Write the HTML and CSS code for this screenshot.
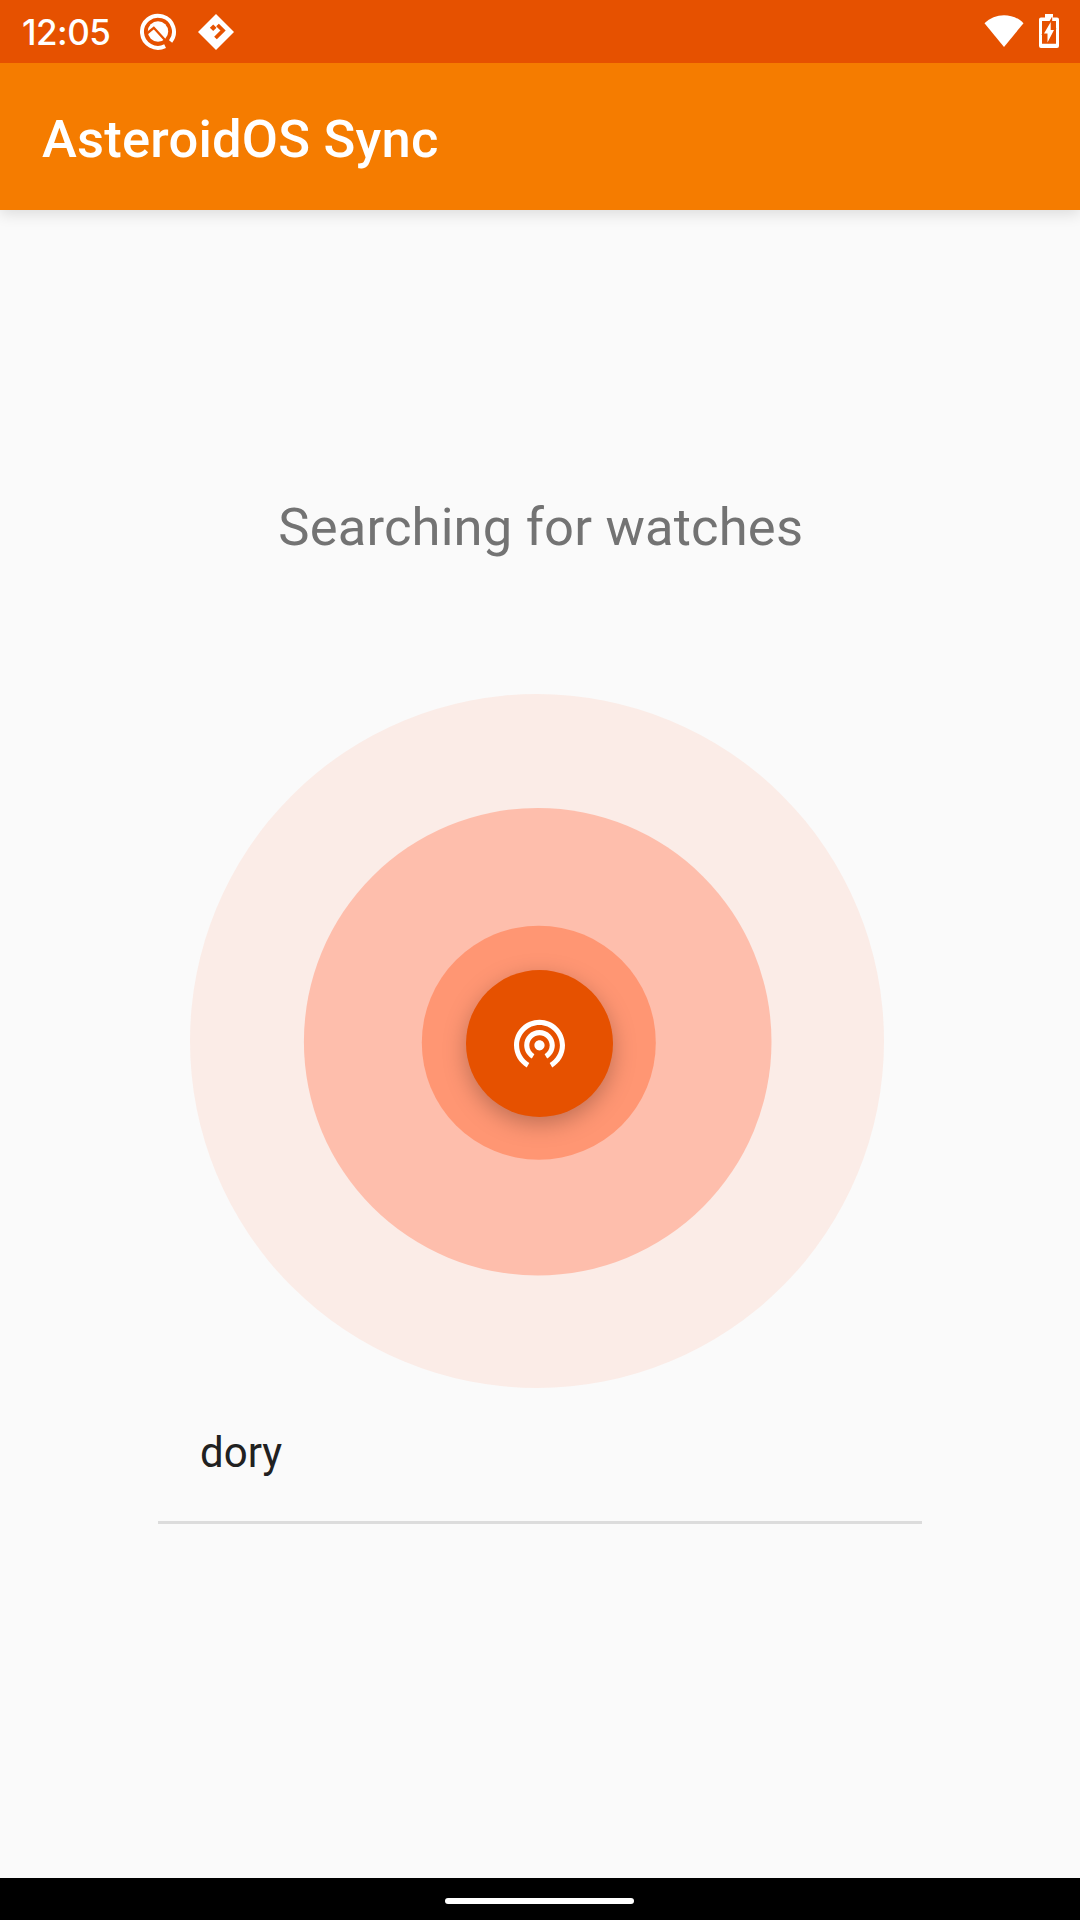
FILE: index.html
```html
<!DOCTYPE html>
<html lang="en">
<head>
<meta charset="utf-8">
<title>AsteroidOS Sync</title>
<link rel="stylesheet" href="styles.css">
</head>
<body>
<div class="screen">
  <div class="status-bar">
    <span class="clock">12:05</span>
    <svg class="icon-q" viewBox="0 0 38 38" width="38" height="38">
      <path d="M26.100 34.100A16 16 0 1 1 31.600 29.600" fill="none" stroke="#fff" stroke-width="4"/>
      <circle cx="19" cy="19.500" r="10.200" fill="#fff"/>
      <path d="M8.500 21L14.800 15.800 31.500 34" fill="none" stroke="#e65100" stroke-width="2.400"/>
    </svg>
    <svg class="icon-diamond" viewBox="0 0 36 36" width="36" height="36">
      <path d="M18 0L36 18 18 36 0 18z" fill="#fff"/>
      <path d="M15.200 10.500l3.300 3.300-3.300 3.300-3.300-3.300z" fill="#e65100"/>
      <path d="M19.500 11L25 16.500 17.500 24" fill="none" stroke="#e65100" stroke-width="3.800"/>
    </svg>
    <svg class="icon-wifi" viewBox="0 0 40 34" width="40" height="34">
      <path d="M0.500 9.200C11 -1.500 29 -1.500 39.500 9.200L20 33z" fill="#fff"/>
    </svg>
    <svg class="icon-battery" viewBox="0 0 20 34" width="20" height="34">
      <path fill="#fff" fill-rule="evenodd" d="M6 0h8v3.500h4a2 2 0 0 1 2 2V32a2 2 0 0 1-2 2H2a2 2 0 0 1-2-2V5.500a2 2 0 0 1 2-2h4zM3 7v22.700h14V7z"/>
      <path class="bolt" d="M11.700 8v8H15L8.500 28.500v-9H5z"/>
    </svg>
  </div>
  <header class="app-bar">AsteroidOS Sync</header>
  <main class="content">
    <h1 class="heading">Searching for watches</h1>
    <svg class="radar" viewBox="190 693 700 700" width="700" height="700">
      <circle class="ring-outer" cx="537" cy="1041" r="347"/>
      <circle class="ring-middle" cx="537.700" cy="1041.700" r="233.800"/>
      <circle class="ring-inner" cx="538.800" cy="1042.700" r="117"/>
      <circle class="button" cx="539.500" cy="1043.500" r="73.500"/>
      <path transform="translate(508.900 1012.200) scale(2.550)" fill="#fff" d="M12 11c-1.100 0-2 .9-2 2s.9 2 2 2 2-.9 2-2-.9-2-2-2zm6 2c0-3.310-2.690-6-6-6s-6 2.690-6 6c0 2.220 1.210 4.150 3 5.190l1-1.740c-1.190-.7-2-1.970-2-3.450 0-2.210 1.790-4 4-4s4 1.790 4 4c0 1.480-.81 2.750-2 3.450l1 1.740c1.790-1.040 3-2.970 3-5.190zM12 3C6.480 3 2 7.480 2 13c0 3.700 2.010 6.920 4.990 8.650l1-1.730C5.610 18.530 4 15.960 4 13c0-4.420 3.580-8 8-8s8 3.580 8 8c0 2.960-1.610 5.530-4 6.920l1 1.730c2.990-1.730 5-4.950 5-8.650 0-5.520-4.480-10-10-10z"/>
    </svg>
    <ul class="devices">
      <li class="device">dory</li>
    </ul>
  </main>
  <div class="nav-bar"><span class="handle"></span></div>
</div>
</body>
</html>
```

FILE: styles.css
```css
* { box-sizing: border-box; }
body { margin: 0; font-family: Roboto, sans-serif; background: #fafafa; }
.screen { width: 1080px; height: 1920px; display: flex; flex-direction: column; overflow: hidden; }

.status-bar { height: 63px; flex: none; display: flex; background: #e65100; color: #fff; }
.clock { font: 500 35px/65px Inter, sans-serif; letter-spacing: -0.5px; width: 117px; margin-left: 22px; }
.icon-q { margin: 12px 0 0; }
.icon-diamond { margin: 14px 0 0 21px; }
.icon-wifi { margin: 14px 0 0 auto; }
.icon-battery { margin: 14px 21px 0 15px; overflow: visible; }
.bolt { fill: #fff; stroke: #e65100; stroke-width: 3px; paint-order: stroke; }

.app-bar { height: 147px; flex: none; padding: 0 42px; background: #f57c00; color: #fff; font-size: 52.5px; font-weight: 500; line-height: 152px; letter-spacing: 0.22px; box-shadow: 0 4px 14px rgba(0, 0, 0, .12); clip-path: inset(0 0 -24px 0); z-index: 1; }

.content { flex: 1; display: flex; flex-direction: column; align-items: center; background: #fafafa; }
.heading { margin: 285px 0 0; padding-left: 1.5px; font-size: 52.5px; font-weight: 400; line-height: 64px; letter-spacing: 0.18px; color: #737373; }
.radar { margin-top: 134px; flex: none; }
.ring-outer { fill: #fbece7; }
.ring-middle { fill: #febeac; }
.ring-inner { fill: #ff9673; }
.button { fill: #e65100; filter: drop-shadow(0 7px 11px rgba(0, 0, 0, .25)); }

.devices { width: 764px; margin: 0; padding: 0; list-style: none; }
.device { height: 131px; padding-left: 42px; font-size: 42px; line-height: 120px; color: #212121; border-bottom: 3px solid #dcdcdc; }

.nav-bar { height: 42px; flex: none; background: #000; display: flex; justify-content: flex-start; padding-left: 445px; }
.handle { width: 189px; height: 6px; margin-top: 20px; border-radius: 3px; background: #fff; }
```
